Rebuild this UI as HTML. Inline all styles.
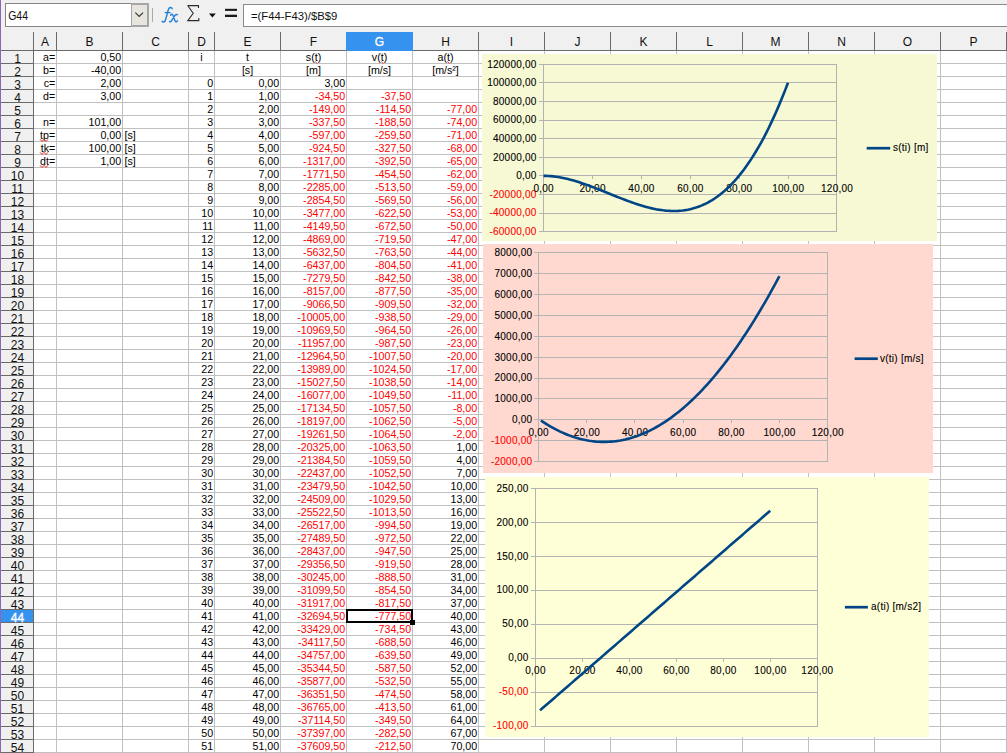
<!DOCTYPE html>
<html><head><meta charset="utf-8"><title>Calc</title>
<style>
html,body{margin:0;padding:0;width:1007px;height:753px;overflow:hidden;background:#f0f0f0;}
svg{display:block;font-family:"Liberation Sans", sans-serif;}
text{font-family:"Liberation Sans", sans-serif;}
</style></head><body>
<svg width="1007" height="753" viewBox="0 0 1007 753">
<rect x="0" y="0" width="1007" height="753" fill="#f0f0f0" />
<rect x="0" y="0" width="1" height="753" fill="#8866b8" />
<rect x="5" y="3" width="144" height="24" fill="#858585" />
<rect x="6" y="4" width="125" height="22" fill="#ffffff" />
<rect x="131" y="3" width="18" height="24" fill="#a6a6a6" />
<rect x="132" y="5" width="15" height="20" fill="#e8e5de" />
<polyline points="135.3,12.6 139.2,16.4 143.1,12.6" fill="none" stroke="#333" stroke-width="1.15"/>
<text x="8.2" y="20.3" font-size="12.5" fill="#111" text-anchor="start" textLength="19.8" lengthAdjust="spacingAndGlyphs">G44</text>
<rect x="152" y="8" width="1" height="14" fill="#a9a9a9" />
<path d="M172.2,8.6 C171.6,7.2 169.8,7.1 168.8,8.6 C167.9,10 166.2,18.5 165.2,20.6 C164.5,22.2 163,22.6 162.2,21.4" fill="none" stroke="#2680d8" stroke-width="1.5" stroke-linecap="round"/>
<path d="M164.6,12.6 L170.6,12.6" fill="none" stroke="#2680d8" stroke-width="1.3"/>
<path d="M170.6,15.2 C171.8,13.6 172.8,14.2 173.4,16.4 L174.8,20.6 C175.4,22.4 176.6,22.2 177.4,20.8 M177.4,14.6 C176.2,14 175.4,14.6 174.2,16.4 L171.8,20.4 C171,21.8 170.2,22.2 169.6,21.6" fill="none" stroke="#2680d8" stroke-width="1.45" stroke-linecap="round"/>
<path d="M187.5,5.6 L198.5,5.6 L198.5,8 M187.8,5.8 L193.2,13.2 L187.8,20.6 L198.8,20.6 L198.8,18" fill="none" stroke="#2a2a2a" stroke-width="1.1"/>
<polygon points="209,13.4 215.8,13.4 212.4,17.5" fill="#111"/>
<rect x="225" y="8.8" width="12" height="2.1" fill="#1a1a1a" />
<rect x="225" y="14.7" width="12" height="2.3" fill="#1a1a1a" />
<rect x="243" y="4" width="764" height="23" fill="#8a8a8a" />
<rect x="244" y="5" width="763" height="21" fill="#ffffff" />
<text x="251" y="19.6" font-size="11.3" fill="#111" text-anchor="start" >=(F44-F43)/$B$9</text>
<rect x="34" y="51" width="973" height="702" fill="#ffffff" />
<rect x="56" y="51" width="1" height="702" fill="#c0c0c0" />
<rect x="122" y="51" width="1" height="702" fill="#c0c0c0" />
<rect x="188" y="51" width="1" height="702" fill="#c0c0c0" />
<rect x="214" y="51" width="1" height="702" fill="#c0c0c0" />
<rect x="280" y="51" width="1" height="702" fill="#c0c0c0" />
<rect x="346" y="51" width="1" height="702" fill="#c0c0c0" />
<rect x="412" y="51" width="1" height="702" fill="#c0c0c0" />
<rect x="478" y="51" width="1" height="702" fill="#c0c0c0" />
<rect x="544" y="51" width="1" height="702" fill="#c0c0c0" />
<rect x="610" y="51" width="1" height="702" fill="#c0c0c0" />
<rect x="676" y="51" width="1" height="702" fill="#c0c0c0" />
<rect x="742" y="51" width="1" height="702" fill="#c0c0c0" />
<rect x="808" y="51" width="1" height="702" fill="#c0c0c0" />
<rect x="874" y="51" width="1" height="702" fill="#c0c0c0" />
<rect x="940" y="51" width="1" height="702" fill="#c0c0c0" />
<rect x="1006" y="51" width="1" height="702" fill="#c0c0c0" />
<rect x="34" y="63" width="973" height="1" fill="#c0c0c0" />
<rect x="34" y="76" width="973" height="1" fill="#c0c0c0" />
<rect x="34" y="89" width="973" height="1" fill="#c0c0c0" />
<rect x="34" y="102" width="973" height="1" fill="#c0c0c0" />
<rect x="34" y="115" width="973" height="1" fill="#c0c0c0" />
<rect x="34" y="128" width="973" height="1" fill="#c0c0c0" />
<rect x="34" y="141" width="973" height="1" fill="#c0c0c0" />
<rect x="34" y="154" width="973" height="1" fill="#c0c0c0" />
<rect x="34" y="167" width="973" height="1" fill="#c0c0c0" />
<rect x="34" y="180" width="973" height="1" fill="#c0c0c0" />
<rect x="34" y="193" width="973" height="1" fill="#c0c0c0" />
<rect x="34" y="206" width="973" height="1" fill="#c0c0c0" />
<rect x="34" y="219" width="973" height="1" fill="#c0c0c0" />
<rect x="34" y="232" width="973" height="1" fill="#c0c0c0" />
<rect x="34" y="245" width="973" height="1" fill="#c0c0c0" />
<rect x="34" y="258" width="973" height="1" fill="#c0c0c0" />
<rect x="34" y="271" width="973" height="1" fill="#c0c0c0" />
<rect x="34" y="284" width="973" height="1" fill="#c0c0c0" />
<rect x="34" y="297" width="973" height="1" fill="#c0c0c0" />
<rect x="34" y="310" width="973" height="1" fill="#c0c0c0" />
<rect x="34" y="323" width="973" height="1" fill="#c0c0c0" />
<rect x="34" y="336" width="973" height="1" fill="#c0c0c0" />
<rect x="34" y="349" width="973" height="1" fill="#c0c0c0" />
<rect x="34" y="362" width="973" height="1" fill="#c0c0c0" />
<rect x="34" y="375" width="973" height="1" fill="#c0c0c0" />
<rect x="34" y="388" width="973" height="1" fill="#c0c0c0" />
<rect x="34" y="401" width="973" height="1" fill="#c0c0c0" />
<rect x="34" y="414" width="973" height="1" fill="#c0c0c0" />
<rect x="34" y="427" width="973" height="1" fill="#c0c0c0" />
<rect x="34" y="440" width="973" height="1" fill="#c0c0c0" />
<rect x="34" y="453" width="973" height="1" fill="#c0c0c0" />
<rect x="34" y="466" width="973" height="1" fill="#c0c0c0" />
<rect x="34" y="479" width="973" height="1" fill="#c0c0c0" />
<rect x="34" y="492" width="973" height="1" fill="#c0c0c0" />
<rect x="34" y="505" width="973" height="1" fill="#c0c0c0" />
<rect x="34" y="518" width="973" height="1" fill="#c0c0c0" />
<rect x="34" y="531" width="973" height="1" fill="#c0c0c0" />
<rect x="34" y="544" width="973" height="1" fill="#c0c0c0" />
<rect x="34" y="557" width="973" height="1" fill="#c0c0c0" />
<rect x="34" y="570" width="973" height="1" fill="#c0c0c0" />
<rect x="34" y="583" width="973" height="1" fill="#c0c0c0" />
<rect x="34" y="596" width="973" height="1" fill="#c0c0c0" />
<rect x="34" y="609" width="973" height="1" fill="#c0c0c0" />
<rect x="34" y="622" width="973" height="1" fill="#c0c0c0" />
<rect x="34" y="635" width="973" height="1" fill="#c0c0c0" />
<rect x="34" y="648" width="973" height="1" fill="#c0c0c0" />
<rect x="34" y="661" width="973" height="1" fill="#c0c0c0" />
<rect x="34" y="674" width="973" height="1" fill="#c0c0c0" />
<rect x="34" y="687" width="973" height="1" fill="#c0c0c0" />
<rect x="34" y="700" width="973" height="1" fill="#c0c0c0" />
<rect x="34" y="713" width="973" height="1" fill="#c0c0c0" />
<rect x="34" y="726" width="973" height="1" fill="#c0c0c0" />
<rect x="34" y="739" width="973" height="1" fill="#c0c0c0" />
<rect x="34" y="752" width="973" height="1" fill="#c0c0c0" />
<rect x="33" y="32" width="1" height="18" fill="#6a6a6a" />
<rect x="56" y="32" width="1" height="18" fill="#6a6a6a" />
<rect x="122" y="32" width="1" height="18" fill="#6a6a6a" />
<rect x="188" y="32" width="1" height="18" fill="#6a6a6a" />
<rect x="214" y="32" width="1" height="18" fill="#6a6a6a" />
<rect x="280" y="32" width="1" height="18" fill="#6a6a6a" />
<rect x="346" y="32" width="1" height="18" fill="#6a6a6a" />
<rect x="412" y="32" width="1" height="18" fill="#6a6a6a" />
<rect x="478" y="32" width="1" height="18" fill="#6a6a6a" />
<rect x="544" y="32" width="1" height="18" fill="#6a6a6a" />
<rect x="610" y="32" width="1" height="18" fill="#6a6a6a" />
<rect x="676" y="32" width="1" height="18" fill="#6a6a6a" />
<rect x="742" y="32" width="1" height="18" fill="#6a6a6a" />
<rect x="808" y="32" width="1" height="18" fill="#6a6a6a" />
<rect x="874" y="32" width="1" height="18" fill="#6a6a6a" />
<rect x="940" y="32" width="1" height="18" fill="#6a6a6a" />
<rect x="1006" y="32" width="1" height="18" fill="#6a6a6a" />
<rect x="1" y="50" width="1006" height="1" fill="#6a6a6a" />
<rect x="346" y="32" width="67" height="19" fill="#3592ef" />
<text x="45.0" y="46" font-size="12" fill="#111" text-anchor="middle" >A</text>
<text x="89.5" y="46" font-size="12" fill="#111" text-anchor="middle" >B</text>
<text x="155.5" y="46" font-size="12" fill="#111" text-anchor="middle" >C</text>
<text x="201.5" y="46" font-size="12" fill="#111" text-anchor="middle" >D</text>
<text x="247.5" y="46" font-size="12" fill="#111" text-anchor="middle" >E</text>
<text x="313.5" y="46" font-size="12" fill="#111" text-anchor="middle" >F</text>
<text x="379.5" y="46" font-size="12" fill="#ffffff" text-anchor="middle" stroke="#ffffff" stroke-width="0.35" >G</text>
<text x="445.5" y="46" font-size="12" fill="#111" text-anchor="middle" >H</text>
<text x="511.5" y="46" font-size="12" fill="#111" text-anchor="middle" >I</text>
<text x="577.5" y="46" font-size="12" fill="#111" text-anchor="middle" >J</text>
<text x="643.5" y="46" font-size="12" fill="#111" text-anchor="middle" >K</text>
<text x="709.5" y="46" font-size="12" fill="#111" text-anchor="middle" >L</text>
<text x="775.5" y="46" font-size="12" fill="#111" text-anchor="middle" >M</text>
<text x="841.5" y="46" font-size="12" fill="#111" text-anchor="middle" >N</text>
<text x="907.5" y="46" font-size="12" fill="#111" text-anchor="middle" >O</text>
<text x="973.5" y="46" font-size="12" fill="#111" text-anchor="middle" >P</text>
<rect x="33" y="32" width="1" height="721" fill="#6a6a6a" />
<rect x="1" y="609" width="32" height="14" fill="#3592ef" />
<rect x="1" y="63" width="32" height="1" fill="#6a6a6a" />
<rect x="1" y="76" width="32" height="1" fill="#6a6a6a" />
<rect x="1" y="89" width="32" height="1" fill="#6a6a6a" />
<rect x="1" y="102" width="32" height="1" fill="#6a6a6a" />
<rect x="1" y="115" width="32" height="1" fill="#6a6a6a" />
<rect x="1" y="128" width="32" height="1" fill="#6a6a6a" />
<rect x="1" y="141" width="32" height="1" fill="#6a6a6a" />
<rect x="1" y="154" width="32" height="1" fill="#6a6a6a" />
<rect x="1" y="167" width="32" height="1" fill="#6a6a6a" />
<rect x="1" y="180" width="32" height="1" fill="#6a6a6a" />
<rect x="1" y="193" width="32" height="1" fill="#6a6a6a" />
<rect x="1" y="206" width="32" height="1" fill="#6a6a6a" />
<rect x="1" y="219" width="32" height="1" fill="#6a6a6a" />
<rect x="1" y="232" width="32" height="1" fill="#6a6a6a" />
<rect x="1" y="245" width="32" height="1" fill="#6a6a6a" />
<rect x="1" y="258" width="32" height="1" fill="#6a6a6a" />
<rect x="1" y="271" width="32" height="1" fill="#6a6a6a" />
<rect x="1" y="284" width="32" height="1" fill="#6a6a6a" />
<rect x="1" y="297" width="32" height="1" fill="#6a6a6a" />
<rect x="1" y="310" width="32" height="1" fill="#6a6a6a" />
<rect x="1" y="323" width="32" height="1" fill="#6a6a6a" />
<rect x="1" y="336" width="32" height="1" fill="#6a6a6a" />
<rect x="1" y="349" width="32" height="1" fill="#6a6a6a" />
<rect x="1" y="362" width="32" height="1" fill="#6a6a6a" />
<rect x="1" y="375" width="32" height="1" fill="#6a6a6a" />
<rect x="1" y="388" width="32" height="1" fill="#6a6a6a" />
<rect x="1" y="401" width="32" height="1" fill="#6a6a6a" />
<rect x="1" y="414" width="32" height="1" fill="#6a6a6a" />
<rect x="1" y="427" width="32" height="1" fill="#6a6a6a" />
<rect x="1" y="440" width="32" height="1" fill="#6a6a6a" />
<rect x="1" y="453" width="32" height="1" fill="#6a6a6a" />
<rect x="1" y="466" width="32" height="1" fill="#6a6a6a" />
<rect x="1" y="479" width="32" height="1" fill="#6a6a6a" />
<rect x="1" y="492" width="32" height="1" fill="#6a6a6a" />
<rect x="1" y="505" width="32" height="1" fill="#6a6a6a" />
<rect x="1" y="518" width="32" height="1" fill="#6a6a6a" />
<rect x="1" y="531" width="32" height="1" fill="#6a6a6a" />
<rect x="1" y="544" width="32" height="1" fill="#6a6a6a" />
<rect x="1" y="557" width="32" height="1" fill="#6a6a6a" />
<rect x="1" y="570" width="32" height="1" fill="#6a6a6a" />
<rect x="1" y="583" width="32" height="1" fill="#6a6a6a" />
<rect x="1" y="596" width="32" height="1" fill="#6a6a6a" />
<rect x="1" y="609" width="32" height="1" fill="#6a6a6a" />
<rect x="1" y="622" width="32" height="1" fill="#6a6a6a" />
<rect x="1" y="635" width="32" height="1" fill="#6a6a6a" />
<rect x="1" y="648" width="32" height="1" fill="#6a6a6a" />
<rect x="1" y="661" width="32" height="1" fill="#6a6a6a" />
<rect x="1" y="674" width="32" height="1" fill="#6a6a6a" />
<rect x="1" y="687" width="32" height="1" fill="#6a6a6a" />
<rect x="1" y="700" width="32" height="1" fill="#6a6a6a" />
<rect x="1" y="713" width="32" height="1" fill="#6a6a6a" />
<rect x="1" y="726" width="32" height="1" fill="#6a6a6a" />
<rect x="1" y="739" width="32" height="1" fill="#6a6a6a" />
<rect x="1" y="752" width="32" height="1" fill="#6a6a6a" />
<text x="17.5" y="63.2" font-size="12" fill="#111" text-anchor="middle" >1</text>
<text x="17.5" y="76.2" font-size="12" fill="#111" text-anchor="middle" >2</text>
<text x="17.5" y="89.2" font-size="12" fill="#111" text-anchor="middle" >3</text>
<text x="17.5" y="102.2" font-size="12" fill="#111" text-anchor="middle" >4</text>
<text x="17.5" y="115.2" font-size="12" fill="#111" text-anchor="middle" >5</text>
<text x="17.5" y="128.2" font-size="12" fill="#111" text-anchor="middle" >6</text>
<text x="17.5" y="141.2" font-size="12" fill="#111" text-anchor="middle" >7</text>
<text x="17.5" y="154.2" font-size="12" fill="#111" text-anchor="middle" >8</text>
<text x="17.5" y="167.2" font-size="12" fill="#111" text-anchor="middle" >9</text>
<text x="17.5" y="180.2" font-size="12" fill="#111" text-anchor="middle" >10</text>
<text x="17.5" y="193.2" font-size="12" fill="#111" text-anchor="middle" >11</text>
<text x="17.5" y="206.2" font-size="12" fill="#111" text-anchor="middle" >12</text>
<text x="17.5" y="219.2" font-size="12" fill="#111" text-anchor="middle" >13</text>
<text x="17.5" y="232.2" font-size="12" fill="#111" text-anchor="middle" >14</text>
<text x="17.5" y="245.2" font-size="12" fill="#111" text-anchor="middle" >15</text>
<text x="17.5" y="258.2" font-size="12" fill="#111" text-anchor="middle" >16</text>
<text x="17.5" y="271.2" font-size="12" fill="#111" text-anchor="middle" >17</text>
<text x="17.5" y="284.2" font-size="12" fill="#111" text-anchor="middle" >18</text>
<text x="17.5" y="297.2" font-size="12" fill="#111" text-anchor="middle" >19</text>
<text x="17.5" y="310.2" font-size="12" fill="#111" text-anchor="middle" >20</text>
<text x="17.5" y="323.2" font-size="12" fill="#111" text-anchor="middle" >21</text>
<text x="17.5" y="336.2" font-size="12" fill="#111" text-anchor="middle" >22</text>
<text x="17.5" y="349.2" font-size="12" fill="#111" text-anchor="middle" >23</text>
<text x="17.5" y="362.2" font-size="12" fill="#111" text-anchor="middle" >24</text>
<text x="17.5" y="375.2" font-size="12" fill="#111" text-anchor="middle" >25</text>
<text x="17.5" y="388.2" font-size="12" fill="#111" text-anchor="middle" >26</text>
<text x="17.5" y="401.2" font-size="12" fill="#111" text-anchor="middle" >27</text>
<text x="17.5" y="414.2" font-size="12" fill="#111" text-anchor="middle" >28</text>
<text x="17.5" y="427.2" font-size="12" fill="#111" text-anchor="middle" >29</text>
<text x="17.5" y="440.2" font-size="12" fill="#111" text-anchor="middle" >30</text>
<text x="17.5" y="453.2" font-size="12" fill="#111" text-anchor="middle" >31</text>
<text x="17.5" y="466.2" font-size="12" fill="#111" text-anchor="middle" >32</text>
<text x="17.5" y="479.2" font-size="12" fill="#111" text-anchor="middle" >33</text>
<text x="17.5" y="492.2" font-size="12" fill="#111" text-anchor="middle" >34</text>
<text x="17.5" y="505.2" font-size="12" fill="#111" text-anchor="middle" >35</text>
<text x="17.5" y="518.2" font-size="12" fill="#111" text-anchor="middle" >36</text>
<text x="17.5" y="531.2" font-size="12" fill="#111" text-anchor="middle" >37</text>
<text x="17.5" y="544.2" font-size="12" fill="#111" text-anchor="middle" >38</text>
<text x="17.5" y="557.2" font-size="12" fill="#111" text-anchor="middle" >39</text>
<text x="17.5" y="570.2" font-size="12" fill="#111" text-anchor="middle" >40</text>
<text x="17.5" y="583.2" font-size="12" fill="#111" text-anchor="middle" >41</text>
<text x="17.5" y="596.2" font-size="12" fill="#111" text-anchor="middle" >42</text>
<text x="17.5" y="609.2" font-size="12" fill="#111" text-anchor="middle" >43</text>
<text x="17.5" y="622.2" font-size="12" fill="#ffffff" text-anchor="middle" stroke="#ffffff" stroke-width="0.35" >44</text>
<text x="17.5" y="635.2" font-size="12" fill="#111" text-anchor="middle" >45</text>
<text x="17.5" y="648.2" font-size="12" fill="#111" text-anchor="middle" >46</text>
<text x="17.5" y="661.2" font-size="12" fill="#111" text-anchor="middle" >47</text>
<text x="17.5" y="674.2" font-size="12" fill="#111" text-anchor="middle" >48</text>
<text x="17.5" y="687.2" font-size="12" fill="#111" text-anchor="middle" >49</text>
<text x="17.5" y="700.2" font-size="12" fill="#111" text-anchor="middle" >50</text>
<text x="17.5" y="713.2" font-size="12" fill="#111" text-anchor="middle" >51</text>
<text x="17.5" y="726.2" font-size="12" fill="#111" text-anchor="middle" >52</text>
<text x="17.5" y="739.2" font-size="12" fill="#111" text-anchor="middle" >53</text>
<text x="17.5" y="752.2" font-size="12" fill="#111" text-anchor="middle" >54</text>
<text x="55.2" y="60.7" font-size="10.67" fill="#000" text-anchor="end" >a=</text>
<text x="121.2" y="60.7" font-size="10.67" fill="#000" text-anchor="end" >0,50</text>
<text x="55.2" y="73.7" font-size="10.67" fill="#000" text-anchor="end" >b=</text>
<text x="121.2" y="73.7" font-size="10.67" fill="#000" text-anchor="end" >-40,00</text>
<text x="55.2" y="86.7" font-size="10.67" fill="#000" text-anchor="end" >c=</text>
<text x="121.2" y="86.7" font-size="10.67" fill="#000" text-anchor="end" >2,00</text>
<text x="55.2" y="99.7" font-size="10.67" fill="#000" text-anchor="end" >d=</text>
<text x="121.2" y="99.7" font-size="10.67" fill="#000" text-anchor="end" >3,00</text>
<text x="55.2" y="125.7" font-size="10.67" fill="#000" text-anchor="end" >n=</text>
<text x="121.2" y="125.7" font-size="10.67" fill="#000" text-anchor="end" >101,00</text>
<text x="55.2" y="138.7" font-size="10.67" fill="#000" text-anchor="end" >tp=</text>
<text x="121.2" y="138.7" font-size="10.67" fill="#000" text-anchor="end" >0,00</text>
<text x="55.2" y="151.7" font-size="10.67" fill="#000" text-anchor="end" >tk=</text>
<text x="121.2" y="151.7" font-size="10.67" fill="#000" text-anchor="end" >100,00</text>
<text x="55.2" y="164.7" font-size="10.67" fill="#000" text-anchor="end" >dt=</text>
<text x="121.2" y="164.7" font-size="10.67" fill="#000" text-anchor="end" >1,00</text>
<text x="124.5" y="138.7" font-size="10.67" fill="#000" text-anchor="start" >[s]</text>
<text x="124.5" y="151.7" font-size="10.67" fill="#000" text-anchor="start" >[s]</text>
<text x="124.5" y="164.7" font-size="10.67" fill="#000" text-anchor="start" >[s]</text>
<text x="201.5" y="60.7" font-size="10.67" fill="#000" text-anchor="middle" >i</text>
<text x="247.5" y="60.7" font-size="10.67" fill="#000" text-anchor="middle" >t</text>
<text x="313.5" y="60.7" font-size="10.67" fill="#000" text-anchor="middle" >s(t)</text>
<text x="379.5" y="60.7" font-size="10.67" fill="#000" text-anchor="middle" >v(t)</text>
<text x="445.5" y="60.7" font-size="10.67" fill="#000" text-anchor="middle" >a(t)</text>
<text x="247.5" y="73.7" font-size="10.67" fill="#000" text-anchor="middle" >[s]</text>
<text x="313.5" y="73.7" font-size="10.67" fill="#000" text-anchor="middle" >[m]</text>
<text x="379.5" y="73.7" font-size="10.67" fill="#000" text-anchor="middle" >[m/s]</text>
<text x="445.5" y="73.7" font-size="10.67" fill="#000" text-anchor="middle" >[m/s²]</text>
<text x="213.2" y="86.7" font-size="10.67" fill="#000" text-anchor="end" >0</text>
<text x="279.2" y="86.7" font-size="10.67" fill="#000" text-anchor="end" >0,00</text>
<text x="345.2" y="86.7" font-size="10.67" fill="#000" text-anchor="end" >3,00</text>
<text x="213.2" y="99.7" font-size="10.67" fill="#000" text-anchor="end" >1</text>
<text x="279.2" y="99.7" font-size="10.67" fill="#000" text-anchor="end" >1,00</text>
<text x="345.2" y="99.7" font-size="10.67" fill="#ff0000" text-anchor="end" >-34,50</text>
<text x="411.2" y="99.7" font-size="10.67" fill="#ff0000" text-anchor="end" >-37,50</text>
<text x="213.2" y="112.7" font-size="10.67" fill="#000" text-anchor="end" >2</text>
<text x="279.2" y="112.7" font-size="10.67" fill="#000" text-anchor="end" >2,00</text>
<text x="345.2" y="112.7" font-size="10.67" fill="#ff0000" text-anchor="end" >-149,00</text>
<text x="411.2" y="112.7" font-size="10.67" fill="#ff0000" text-anchor="end" >-114,50</text>
<text x="477.2" y="112.7" font-size="10.67" fill="#ff0000" text-anchor="end" >-77,00</text>
<text x="213.2" y="125.7" font-size="10.67" fill="#000" text-anchor="end" >3</text>
<text x="279.2" y="125.7" font-size="10.67" fill="#000" text-anchor="end" >3,00</text>
<text x="345.2" y="125.7" font-size="10.67" fill="#ff0000" text-anchor="end" >-337,50</text>
<text x="411.2" y="125.7" font-size="10.67" fill="#ff0000" text-anchor="end" >-188,50</text>
<text x="477.2" y="125.7" font-size="10.67" fill="#ff0000" text-anchor="end" >-74,00</text>
<text x="213.2" y="138.7" font-size="10.67" fill="#000" text-anchor="end" >4</text>
<text x="279.2" y="138.7" font-size="10.67" fill="#000" text-anchor="end" >4,00</text>
<text x="345.2" y="138.7" font-size="10.67" fill="#ff0000" text-anchor="end" >-597,00</text>
<text x="411.2" y="138.7" font-size="10.67" fill="#ff0000" text-anchor="end" >-259,50</text>
<text x="477.2" y="138.7" font-size="10.67" fill="#ff0000" text-anchor="end" >-71,00</text>
<text x="213.2" y="151.7" font-size="10.67" fill="#000" text-anchor="end" >5</text>
<text x="279.2" y="151.7" font-size="10.67" fill="#000" text-anchor="end" >5,00</text>
<text x="345.2" y="151.7" font-size="10.67" fill="#ff0000" text-anchor="end" >-924,50</text>
<text x="411.2" y="151.7" font-size="10.67" fill="#ff0000" text-anchor="end" >-327,50</text>
<text x="477.2" y="151.7" font-size="10.67" fill="#ff0000" text-anchor="end" >-68,00</text>
<text x="213.2" y="164.7" font-size="10.67" fill="#000" text-anchor="end" >6</text>
<text x="279.2" y="164.7" font-size="10.67" fill="#000" text-anchor="end" >6,00</text>
<text x="345.2" y="164.7" font-size="10.67" fill="#ff0000" text-anchor="end" >-1317,00</text>
<text x="411.2" y="164.7" font-size="10.67" fill="#ff0000" text-anchor="end" >-392,50</text>
<text x="477.2" y="164.7" font-size="10.67" fill="#ff0000" text-anchor="end" >-65,00</text>
<text x="213.2" y="177.7" font-size="10.67" fill="#000" text-anchor="end" >7</text>
<text x="279.2" y="177.7" font-size="10.67" fill="#000" text-anchor="end" >7,00</text>
<text x="345.2" y="177.7" font-size="10.67" fill="#ff0000" text-anchor="end" >-1771,50</text>
<text x="411.2" y="177.7" font-size="10.67" fill="#ff0000" text-anchor="end" >-454,50</text>
<text x="477.2" y="177.7" font-size="10.67" fill="#ff0000" text-anchor="end" >-62,00</text>
<text x="213.2" y="190.7" font-size="10.67" fill="#000" text-anchor="end" >8</text>
<text x="279.2" y="190.7" font-size="10.67" fill="#000" text-anchor="end" >8,00</text>
<text x="345.2" y="190.7" font-size="10.67" fill="#ff0000" text-anchor="end" >-2285,00</text>
<text x="411.2" y="190.7" font-size="10.67" fill="#ff0000" text-anchor="end" >-513,50</text>
<text x="477.2" y="190.7" font-size="10.67" fill="#ff0000" text-anchor="end" >-59,00</text>
<text x="213.2" y="203.7" font-size="10.67" fill="#000" text-anchor="end" >9</text>
<text x="279.2" y="203.7" font-size="10.67" fill="#000" text-anchor="end" >9,00</text>
<text x="345.2" y="203.7" font-size="10.67" fill="#ff0000" text-anchor="end" >-2854,50</text>
<text x="411.2" y="203.7" font-size="10.67" fill="#ff0000" text-anchor="end" >-569,50</text>
<text x="477.2" y="203.7" font-size="10.67" fill="#ff0000" text-anchor="end" >-56,00</text>
<text x="213.2" y="216.7" font-size="10.67" fill="#000" text-anchor="end" >10</text>
<text x="279.2" y="216.7" font-size="10.67" fill="#000" text-anchor="end" >10,00</text>
<text x="345.2" y="216.7" font-size="10.67" fill="#ff0000" text-anchor="end" >-3477,00</text>
<text x="411.2" y="216.7" font-size="10.67" fill="#ff0000" text-anchor="end" >-622,50</text>
<text x="477.2" y="216.7" font-size="10.67" fill="#ff0000" text-anchor="end" >-53,00</text>
<text x="213.2" y="229.7" font-size="10.67" fill="#000" text-anchor="end" >11</text>
<text x="279.2" y="229.7" font-size="10.67" fill="#000" text-anchor="end" >11,00</text>
<text x="345.2" y="229.7" font-size="10.67" fill="#ff0000" text-anchor="end" >-4149,50</text>
<text x="411.2" y="229.7" font-size="10.67" fill="#ff0000" text-anchor="end" >-672,50</text>
<text x="477.2" y="229.7" font-size="10.67" fill="#ff0000" text-anchor="end" >-50,00</text>
<text x="213.2" y="242.7" font-size="10.67" fill="#000" text-anchor="end" >12</text>
<text x="279.2" y="242.7" font-size="10.67" fill="#000" text-anchor="end" >12,00</text>
<text x="345.2" y="242.7" font-size="10.67" fill="#ff0000" text-anchor="end" >-4869,00</text>
<text x="411.2" y="242.7" font-size="10.67" fill="#ff0000" text-anchor="end" >-719,50</text>
<text x="477.2" y="242.7" font-size="10.67" fill="#ff0000" text-anchor="end" >-47,00</text>
<text x="213.2" y="255.7" font-size="10.67" fill="#000" text-anchor="end" >13</text>
<text x="279.2" y="255.7" font-size="10.67" fill="#000" text-anchor="end" >13,00</text>
<text x="345.2" y="255.7" font-size="10.67" fill="#ff0000" text-anchor="end" >-5632,50</text>
<text x="411.2" y="255.7" font-size="10.67" fill="#ff0000" text-anchor="end" >-763,50</text>
<text x="477.2" y="255.7" font-size="10.67" fill="#ff0000" text-anchor="end" >-44,00</text>
<text x="213.2" y="268.7" font-size="10.67" fill="#000" text-anchor="end" >14</text>
<text x="279.2" y="268.7" font-size="10.67" fill="#000" text-anchor="end" >14,00</text>
<text x="345.2" y="268.7" font-size="10.67" fill="#ff0000" text-anchor="end" >-6437,00</text>
<text x="411.2" y="268.7" font-size="10.67" fill="#ff0000" text-anchor="end" >-804,50</text>
<text x="477.2" y="268.7" font-size="10.67" fill="#ff0000" text-anchor="end" >-41,00</text>
<text x="213.2" y="281.7" font-size="10.67" fill="#000" text-anchor="end" >15</text>
<text x="279.2" y="281.7" font-size="10.67" fill="#000" text-anchor="end" >15,00</text>
<text x="345.2" y="281.7" font-size="10.67" fill="#ff0000" text-anchor="end" >-7279,50</text>
<text x="411.2" y="281.7" font-size="10.67" fill="#ff0000" text-anchor="end" >-842,50</text>
<text x="477.2" y="281.7" font-size="10.67" fill="#ff0000" text-anchor="end" >-38,00</text>
<text x="213.2" y="294.7" font-size="10.67" fill="#000" text-anchor="end" >16</text>
<text x="279.2" y="294.7" font-size="10.67" fill="#000" text-anchor="end" >16,00</text>
<text x="345.2" y="294.7" font-size="10.67" fill="#ff0000" text-anchor="end" >-8157,00</text>
<text x="411.2" y="294.7" font-size="10.67" fill="#ff0000" text-anchor="end" >-877,50</text>
<text x="477.2" y="294.7" font-size="10.67" fill="#ff0000" text-anchor="end" >-35,00</text>
<text x="213.2" y="307.7" font-size="10.67" fill="#000" text-anchor="end" >17</text>
<text x="279.2" y="307.7" font-size="10.67" fill="#000" text-anchor="end" >17,00</text>
<text x="345.2" y="307.7" font-size="10.67" fill="#ff0000" text-anchor="end" >-9066,50</text>
<text x="411.2" y="307.7" font-size="10.67" fill="#ff0000" text-anchor="end" >-909,50</text>
<text x="477.2" y="307.7" font-size="10.67" fill="#ff0000" text-anchor="end" >-32,00</text>
<text x="213.2" y="320.7" font-size="10.67" fill="#000" text-anchor="end" >18</text>
<text x="279.2" y="320.7" font-size="10.67" fill="#000" text-anchor="end" >18,00</text>
<text x="345.2" y="320.7" font-size="10.67" fill="#ff0000" text-anchor="end" >-10005,00</text>
<text x="411.2" y="320.7" font-size="10.67" fill="#ff0000" text-anchor="end" >-938,50</text>
<text x="477.2" y="320.7" font-size="10.67" fill="#ff0000" text-anchor="end" >-29,00</text>
<text x="213.2" y="333.7" font-size="10.67" fill="#000" text-anchor="end" >19</text>
<text x="279.2" y="333.7" font-size="10.67" fill="#000" text-anchor="end" >19,00</text>
<text x="345.2" y="333.7" font-size="10.67" fill="#ff0000" text-anchor="end" >-10969,50</text>
<text x="411.2" y="333.7" font-size="10.67" fill="#ff0000" text-anchor="end" >-964,50</text>
<text x="477.2" y="333.7" font-size="10.67" fill="#ff0000" text-anchor="end" >-26,00</text>
<text x="213.2" y="346.7" font-size="10.67" fill="#000" text-anchor="end" >20</text>
<text x="279.2" y="346.7" font-size="10.67" fill="#000" text-anchor="end" >20,00</text>
<text x="345.2" y="346.7" font-size="10.67" fill="#ff0000" text-anchor="end" >-11957,00</text>
<text x="411.2" y="346.7" font-size="10.67" fill="#ff0000" text-anchor="end" >-987,50</text>
<text x="477.2" y="346.7" font-size="10.67" fill="#ff0000" text-anchor="end" >-23,00</text>
<text x="213.2" y="359.7" font-size="10.67" fill="#000" text-anchor="end" >21</text>
<text x="279.2" y="359.7" font-size="10.67" fill="#000" text-anchor="end" >21,00</text>
<text x="345.2" y="359.7" font-size="10.67" fill="#ff0000" text-anchor="end" >-12964,50</text>
<text x="411.2" y="359.7" font-size="10.67" fill="#ff0000" text-anchor="end" >-1007,50</text>
<text x="477.2" y="359.7" font-size="10.67" fill="#ff0000" text-anchor="end" >-20,00</text>
<text x="213.2" y="372.7" font-size="10.67" fill="#000" text-anchor="end" >22</text>
<text x="279.2" y="372.7" font-size="10.67" fill="#000" text-anchor="end" >22,00</text>
<text x="345.2" y="372.7" font-size="10.67" fill="#ff0000" text-anchor="end" >-13989,00</text>
<text x="411.2" y="372.7" font-size="10.67" fill="#ff0000" text-anchor="end" >-1024,50</text>
<text x="477.2" y="372.7" font-size="10.67" fill="#ff0000" text-anchor="end" >-17,00</text>
<text x="213.2" y="385.7" font-size="10.67" fill="#000" text-anchor="end" >23</text>
<text x="279.2" y="385.7" font-size="10.67" fill="#000" text-anchor="end" >23,00</text>
<text x="345.2" y="385.7" font-size="10.67" fill="#ff0000" text-anchor="end" >-15027,50</text>
<text x="411.2" y="385.7" font-size="10.67" fill="#ff0000" text-anchor="end" >-1038,50</text>
<text x="477.2" y="385.7" font-size="10.67" fill="#ff0000" text-anchor="end" >-14,00</text>
<text x="213.2" y="398.7" font-size="10.67" fill="#000" text-anchor="end" >24</text>
<text x="279.2" y="398.7" font-size="10.67" fill="#000" text-anchor="end" >24,00</text>
<text x="345.2" y="398.7" font-size="10.67" fill="#ff0000" text-anchor="end" >-16077,00</text>
<text x="411.2" y="398.7" font-size="10.67" fill="#ff0000" text-anchor="end" >-1049,50</text>
<text x="477.2" y="398.7" font-size="10.67" fill="#ff0000" text-anchor="end" >-11,00</text>
<text x="213.2" y="411.7" font-size="10.67" fill="#000" text-anchor="end" >25</text>
<text x="279.2" y="411.7" font-size="10.67" fill="#000" text-anchor="end" >25,00</text>
<text x="345.2" y="411.7" font-size="10.67" fill="#ff0000" text-anchor="end" >-17134,50</text>
<text x="411.2" y="411.7" font-size="10.67" fill="#ff0000" text-anchor="end" >-1057,50</text>
<text x="477.2" y="411.7" font-size="10.67" fill="#ff0000" text-anchor="end" >-8,00</text>
<text x="213.2" y="424.7" font-size="10.67" fill="#000" text-anchor="end" >26</text>
<text x="279.2" y="424.7" font-size="10.67" fill="#000" text-anchor="end" >26,00</text>
<text x="345.2" y="424.7" font-size="10.67" fill="#ff0000" text-anchor="end" >-18197,00</text>
<text x="411.2" y="424.7" font-size="10.67" fill="#ff0000" text-anchor="end" >-1062,50</text>
<text x="477.2" y="424.7" font-size="10.67" fill="#ff0000" text-anchor="end" >-5,00</text>
<text x="213.2" y="437.7" font-size="10.67" fill="#000" text-anchor="end" >27</text>
<text x="279.2" y="437.7" font-size="10.67" fill="#000" text-anchor="end" >27,00</text>
<text x="345.2" y="437.7" font-size="10.67" fill="#ff0000" text-anchor="end" >-19261,50</text>
<text x="411.2" y="437.7" font-size="10.67" fill="#ff0000" text-anchor="end" >-1064,50</text>
<text x="477.2" y="437.7" font-size="10.67" fill="#ff0000" text-anchor="end" >-2,00</text>
<text x="213.2" y="450.7" font-size="10.67" fill="#000" text-anchor="end" >28</text>
<text x="279.2" y="450.7" font-size="10.67" fill="#000" text-anchor="end" >28,00</text>
<text x="345.2" y="450.7" font-size="10.67" fill="#ff0000" text-anchor="end" >-20325,00</text>
<text x="411.2" y="450.7" font-size="10.67" fill="#ff0000" text-anchor="end" >-1063,50</text>
<text x="477.2" y="450.7" font-size="10.67" fill="#000" text-anchor="end" >1,00</text>
<text x="213.2" y="463.7" font-size="10.67" fill="#000" text-anchor="end" >29</text>
<text x="279.2" y="463.7" font-size="10.67" fill="#000" text-anchor="end" >29,00</text>
<text x="345.2" y="463.7" font-size="10.67" fill="#ff0000" text-anchor="end" >-21384,50</text>
<text x="411.2" y="463.7" font-size="10.67" fill="#ff0000" text-anchor="end" >-1059,50</text>
<text x="477.2" y="463.7" font-size="10.67" fill="#000" text-anchor="end" >4,00</text>
<text x="213.2" y="476.7" font-size="10.67" fill="#000" text-anchor="end" >30</text>
<text x="279.2" y="476.7" font-size="10.67" fill="#000" text-anchor="end" >30,00</text>
<text x="345.2" y="476.7" font-size="10.67" fill="#ff0000" text-anchor="end" >-22437,00</text>
<text x="411.2" y="476.7" font-size="10.67" fill="#ff0000" text-anchor="end" >-1052,50</text>
<text x="477.2" y="476.7" font-size="10.67" fill="#000" text-anchor="end" >7,00</text>
<text x="213.2" y="489.7" font-size="10.67" fill="#000" text-anchor="end" >31</text>
<text x="279.2" y="489.7" font-size="10.67" fill="#000" text-anchor="end" >31,00</text>
<text x="345.2" y="489.7" font-size="10.67" fill="#ff0000" text-anchor="end" >-23479,50</text>
<text x="411.2" y="489.7" font-size="10.67" fill="#ff0000" text-anchor="end" >-1042,50</text>
<text x="477.2" y="489.7" font-size="10.67" fill="#000" text-anchor="end" >10,00</text>
<text x="213.2" y="502.7" font-size="10.67" fill="#000" text-anchor="end" >32</text>
<text x="279.2" y="502.7" font-size="10.67" fill="#000" text-anchor="end" >32,00</text>
<text x="345.2" y="502.7" font-size="10.67" fill="#ff0000" text-anchor="end" >-24509,00</text>
<text x="411.2" y="502.7" font-size="10.67" fill="#ff0000" text-anchor="end" >-1029,50</text>
<text x="477.2" y="502.7" font-size="10.67" fill="#000" text-anchor="end" >13,00</text>
<text x="213.2" y="515.7" font-size="10.67" fill="#000" text-anchor="end" >33</text>
<text x="279.2" y="515.7" font-size="10.67" fill="#000" text-anchor="end" >33,00</text>
<text x="345.2" y="515.7" font-size="10.67" fill="#ff0000" text-anchor="end" >-25522,50</text>
<text x="411.2" y="515.7" font-size="10.67" fill="#ff0000" text-anchor="end" >-1013,50</text>
<text x="477.2" y="515.7" font-size="10.67" fill="#000" text-anchor="end" >16,00</text>
<text x="213.2" y="528.7" font-size="10.67" fill="#000" text-anchor="end" >34</text>
<text x="279.2" y="528.7" font-size="10.67" fill="#000" text-anchor="end" >34,00</text>
<text x="345.2" y="528.7" font-size="10.67" fill="#ff0000" text-anchor="end" >-26517,00</text>
<text x="411.2" y="528.7" font-size="10.67" fill="#ff0000" text-anchor="end" >-994,50</text>
<text x="477.2" y="528.7" font-size="10.67" fill="#000" text-anchor="end" >19,00</text>
<text x="213.2" y="541.7" font-size="10.67" fill="#000" text-anchor="end" >35</text>
<text x="279.2" y="541.7" font-size="10.67" fill="#000" text-anchor="end" >35,00</text>
<text x="345.2" y="541.7" font-size="10.67" fill="#ff0000" text-anchor="end" >-27489,50</text>
<text x="411.2" y="541.7" font-size="10.67" fill="#ff0000" text-anchor="end" >-972,50</text>
<text x="477.2" y="541.7" font-size="10.67" fill="#000" text-anchor="end" >22,00</text>
<text x="213.2" y="554.7" font-size="10.67" fill="#000" text-anchor="end" >36</text>
<text x="279.2" y="554.7" font-size="10.67" fill="#000" text-anchor="end" >36,00</text>
<text x="345.2" y="554.7" font-size="10.67" fill="#ff0000" text-anchor="end" >-28437,00</text>
<text x="411.2" y="554.7" font-size="10.67" fill="#ff0000" text-anchor="end" >-947,50</text>
<text x="477.2" y="554.7" font-size="10.67" fill="#000" text-anchor="end" >25,00</text>
<text x="213.2" y="567.7" font-size="10.67" fill="#000" text-anchor="end" >37</text>
<text x="279.2" y="567.7" font-size="10.67" fill="#000" text-anchor="end" >37,00</text>
<text x="345.2" y="567.7" font-size="10.67" fill="#ff0000" text-anchor="end" >-29356,50</text>
<text x="411.2" y="567.7" font-size="10.67" fill="#ff0000" text-anchor="end" >-919,50</text>
<text x="477.2" y="567.7" font-size="10.67" fill="#000" text-anchor="end" >28,00</text>
<text x="213.2" y="580.7" font-size="10.67" fill="#000" text-anchor="end" >38</text>
<text x="279.2" y="580.7" font-size="10.67" fill="#000" text-anchor="end" >38,00</text>
<text x="345.2" y="580.7" font-size="10.67" fill="#ff0000" text-anchor="end" >-30245,00</text>
<text x="411.2" y="580.7" font-size="10.67" fill="#ff0000" text-anchor="end" >-888,50</text>
<text x="477.2" y="580.7" font-size="10.67" fill="#000" text-anchor="end" >31,00</text>
<text x="213.2" y="593.7" font-size="10.67" fill="#000" text-anchor="end" >39</text>
<text x="279.2" y="593.7" font-size="10.67" fill="#000" text-anchor="end" >39,00</text>
<text x="345.2" y="593.7" font-size="10.67" fill="#ff0000" text-anchor="end" >-31099,50</text>
<text x="411.2" y="593.7" font-size="10.67" fill="#ff0000" text-anchor="end" >-854,50</text>
<text x="477.2" y="593.7" font-size="10.67" fill="#000" text-anchor="end" >34,00</text>
<text x="213.2" y="606.7" font-size="10.67" fill="#000" text-anchor="end" >40</text>
<text x="279.2" y="606.7" font-size="10.67" fill="#000" text-anchor="end" >40,00</text>
<text x="345.2" y="606.7" font-size="10.67" fill="#ff0000" text-anchor="end" >-31917,00</text>
<text x="411.2" y="606.7" font-size="10.67" fill="#ff0000" text-anchor="end" >-817,50</text>
<text x="477.2" y="606.7" font-size="10.67" fill="#000" text-anchor="end" >37,00</text>
<text x="213.2" y="619.7" font-size="10.67" fill="#000" text-anchor="end" >41</text>
<text x="279.2" y="619.7" font-size="10.67" fill="#000" text-anchor="end" >41,00</text>
<text x="345.2" y="619.7" font-size="10.67" fill="#ff0000" text-anchor="end" >-32694,50</text>
<text x="411.2" y="619.7" font-size="10.67" fill="#ff0000" text-anchor="end" >-777,50</text>
<text x="477.2" y="619.7" font-size="10.67" fill="#000" text-anchor="end" >40,00</text>
<text x="213.2" y="632.7" font-size="10.67" fill="#000" text-anchor="end" >42</text>
<text x="279.2" y="632.7" font-size="10.67" fill="#000" text-anchor="end" >42,00</text>
<text x="345.2" y="632.7" font-size="10.67" fill="#ff0000" text-anchor="end" >-33429,00</text>
<text x="411.2" y="632.7" font-size="10.67" fill="#ff0000" text-anchor="end" >-734,50</text>
<text x="477.2" y="632.7" font-size="10.67" fill="#000" text-anchor="end" >43,00</text>
<text x="213.2" y="645.7" font-size="10.67" fill="#000" text-anchor="end" >43</text>
<text x="279.2" y="645.7" font-size="10.67" fill="#000" text-anchor="end" >43,00</text>
<text x="345.2" y="645.7" font-size="10.67" fill="#ff0000" text-anchor="end" >-34117,50</text>
<text x="411.2" y="645.7" font-size="10.67" fill="#ff0000" text-anchor="end" >-688,50</text>
<text x="477.2" y="645.7" font-size="10.67" fill="#000" text-anchor="end" >46,00</text>
<text x="213.2" y="658.7" font-size="10.67" fill="#000" text-anchor="end" >44</text>
<text x="279.2" y="658.7" font-size="10.67" fill="#000" text-anchor="end" >44,00</text>
<text x="345.2" y="658.7" font-size="10.67" fill="#ff0000" text-anchor="end" >-34757,00</text>
<text x="411.2" y="658.7" font-size="10.67" fill="#ff0000" text-anchor="end" >-639,50</text>
<text x="477.2" y="658.7" font-size="10.67" fill="#000" text-anchor="end" >49,00</text>
<text x="213.2" y="671.7" font-size="10.67" fill="#000" text-anchor="end" >45</text>
<text x="279.2" y="671.7" font-size="10.67" fill="#000" text-anchor="end" >45,00</text>
<text x="345.2" y="671.7" font-size="10.67" fill="#ff0000" text-anchor="end" >-35344,50</text>
<text x="411.2" y="671.7" font-size="10.67" fill="#ff0000" text-anchor="end" >-587,50</text>
<text x="477.2" y="671.7" font-size="10.67" fill="#000" text-anchor="end" >52,00</text>
<text x="213.2" y="684.7" font-size="10.67" fill="#000" text-anchor="end" >46</text>
<text x="279.2" y="684.7" font-size="10.67" fill="#000" text-anchor="end" >46,00</text>
<text x="345.2" y="684.7" font-size="10.67" fill="#ff0000" text-anchor="end" >-35877,00</text>
<text x="411.2" y="684.7" font-size="10.67" fill="#ff0000" text-anchor="end" >-532,50</text>
<text x="477.2" y="684.7" font-size="10.67" fill="#000" text-anchor="end" >55,00</text>
<text x="213.2" y="697.7" font-size="10.67" fill="#000" text-anchor="end" >47</text>
<text x="279.2" y="697.7" font-size="10.67" fill="#000" text-anchor="end" >47,00</text>
<text x="345.2" y="697.7" font-size="10.67" fill="#ff0000" text-anchor="end" >-36351,50</text>
<text x="411.2" y="697.7" font-size="10.67" fill="#ff0000" text-anchor="end" >-474,50</text>
<text x="477.2" y="697.7" font-size="10.67" fill="#000" text-anchor="end" >58,00</text>
<text x="213.2" y="710.7" font-size="10.67" fill="#000" text-anchor="end" >48</text>
<text x="279.2" y="710.7" font-size="10.67" fill="#000" text-anchor="end" >48,00</text>
<text x="345.2" y="710.7" font-size="10.67" fill="#ff0000" text-anchor="end" >-36765,00</text>
<text x="411.2" y="710.7" font-size="10.67" fill="#ff0000" text-anchor="end" >-413,50</text>
<text x="477.2" y="710.7" font-size="10.67" fill="#000" text-anchor="end" >61,00</text>
<text x="213.2" y="723.7" font-size="10.67" fill="#000" text-anchor="end" >49</text>
<text x="279.2" y="723.7" font-size="10.67" fill="#000" text-anchor="end" >49,00</text>
<text x="345.2" y="723.7" font-size="10.67" fill="#ff0000" text-anchor="end" >-37114,50</text>
<text x="411.2" y="723.7" font-size="10.67" fill="#ff0000" text-anchor="end" >-349,50</text>
<text x="477.2" y="723.7" font-size="10.67" fill="#000" text-anchor="end" >64,00</text>
<text x="213.2" y="736.7" font-size="10.67" fill="#000" text-anchor="end" >50</text>
<text x="279.2" y="736.7" font-size="10.67" fill="#000" text-anchor="end" >50,00</text>
<text x="345.2" y="736.7" font-size="10.67" fill="#ff0000" text-anchor="end" >-37397,00</text>
<text x="411.2" y="736.7" font-size="10.67" fill="#ff0000" text-anchor="end" >-282,50</text>
<text x="477.2" y="736.7" font-size="10.67" fill="#000" text-anchor="end" >67,00</text>
<text x="213.2" y="749.7" font-size="10.67" fill="#000" text-anchor="end" >51</text>
<text x="279.2" y="749.7" font-size="10.67" fill="#000" text-anchor="end" >51,00</text>
<text x="345.2" y="749.7" font-size="10.67" fill="#ff0000" text-anchor="end" >-37609,50</text>
<text x="411.2" y="749.7" font-size="10.67" fill="#ff0000" text-anchor="end" >-212,50</text>
<text x="477.2" y="749.7" font-size="10.67" fill="#000" text-anchor="end" >70,00</text>
<polyline points="315.20,61.50 317.20,63.70" fill="none" stroke="#f02a2a" stroke-width="1" stroke-linejoin="round"/>
<polyline points="381.30,61.50 383.30,63.70" fill="none" stroke="#f02a2a" stroke-width="1" stroke-linejoin="round"/>
<polyline points="447.50,61.50 449.50,63.70" fill="none" stroke="#f02a2a" stroke-width="1" stroke-linejoin="round"/>
<polyline points="40.00,139.30 42.00,141.50 44.00,139.30 46.00,141.50 48.00,139.30" fill="none" stroke="#f02a2a" stroke-width="1" stroke-linejoin="round"/>
<polyline points="40.00,152.30 42.00,154.50 44.00,152.30 46.00,154.50 48.00,152.30" fill="none" stroke="#f02a2a" stroke-width="1" stroke-linejoin="round"/>
<polyline points="40.00,165.30 42.00,167.50 44.00,165.30 46.00,167.50 48.00,165.30" fill="none" stroke="#f02a2a" stroke-width="1" stroke-linejoin="round"/>
<rect x="482" y="54" width="455" height="187" fill="#f6f9d4" />
<rect x="539" y="64" width="298" height="1" fill="#b3b3b3" />
<text x="536.6999999999999" y="67.6" font-size="10" fill="#000" text-anchor="end" stroke="#000" stroke-width="0.1" letter-spacing="0.25">120000,00</text>
<rect x="539" y="82" width="298" height="1" fill="#b3b3b3" />
<text x="536.6999999999999" y="86.19" font-size="10" fill="#000" text-anchor="end" stroke="#000" stroke-width="0.1" letter-spacing="0.25">100000,00</text>
<rect x="539" y="101" width="298" height="1" fill="#b3b3b3" />
<text x="536.6999999999999" y="104.78" font-size="10" fill="#000" text-anchor="end" stroke="#000" stroke-width="0.1" letter-spacing="0.25">80000,00</text>
<rect x="539" y="120" width="298" height="1" fill="#b3b3b3" />
<text x="536.6999999999999" y="123.37" font-size="10" fill="#000" text-anchor="end" stroke="#000" stroke-width="0.1" letter-spacing="0.25">60000,00</text>
<rect x="539" y="138" width="298" height="1" fill="#b3b3b3" />
<text x="536.6999999999999" y="141.96" font-size="10" fill="#000" text-anchor="end" stroke="#000" stroke-width="0.1" letter-spacing="0.25">40000,00</text>
<rect x="539" y="157" width="298" height="1" fill="#b3b3b3" />
<text x="536.6999999999999" y="160.54" font-size="10" fill="#000" text-anchor="end" stroke="#000" stroke-width="0.1" letter-spacing="0.25">20000,00</text>
<rect x="539" y="175" width="298" height="1" fill="#b3b3b3" />
<text x="536.6999999999999" y="179.13" font-size="10" fill="#000" text-anchor="end" stroke="#000" stroke-width="0.1" letter-spacing="0.25">0,00</text>
<rect x="539" y="194" width="298" height="1" fill="#b3b3b3" />
<text x="536.6999999999999" y="197.72" font-size="10" fill="#ff0000" text-anchor="end" stroke="#ff0000" stroke-width="0.1" letter-spacing="0.25">-20000,00</text>
<rect x="539" y="213" width="298" height="1" fill="#b3b3b3" />
<text x="536.6999999999999" y="216.31" font-size="10" fill="#ff0000" text-anchor="end" stroke="#ff0000" stroke-width="0.1" letter-spacing="0.25">-40000,00</text>
<rect x="539" y="231" width="298" height="1" fill="#b3b3b3" />
<text x="536.6999999999999" y="234.9" font-size="10" fill="#ff0000" text-anchor="end" stroke="#ff0000" stroke-width="0.1" letter-spacing="0.25">-60000,00</text>
<rect x="543" y="64" width="1" height="168" fill="#b3b3b3" />
<rect x="836" y="64" width="1" height="168" fill="#b3b3b3" />
<rect x="543" y="175" width="1" height="4" fill="#b3b3b3" />
<text x="543.7" y="191.83" font-size="10" fill="#000" text-anchor="middle" stroke="#000" stroke-width="0.1" letter-spacing="0.25">0,00</text>
<rect x="592" y="175" width="1" height="4" fill="#b3b3b3" />
<text x="592.6" y="191.83" font-size="10" fill="#000" text-anchor="middle" stroke="#000" stroke-width="0.1" letter-spacing="0.25">20,00</text>
<rect x="641" y="175" width="1" height="4" fill="#b3b3b3" />
<text x="641.5" y="191.83" font-size="10" fill="#000" text-anchor="middle" stroke="#000" stroke-width="0.1" letter-spacing="0.25">40,00</text>
<rect x="690" y="175" width="1" height="4" fill="#b3b3b3" />
<text x="690.4" y="191.83" font-size="10" fill="#000" text-anchor="middle" stroke="#000" stroke-width="0.1" letter-spacing="0.25">60,00</text>
<rect x="739" y="175" width="1" height="4" fill="#b3b3b3" />
<text x="739.3" y="191.83" font-size="10" fill="#000" text-anchor="middle" stroke="#000" stroke-width="0.1" letter-spacing="0.25">80,00</text>
<rect x="788" y="175" width="1" height="4" fill="#b3b3b3" />
<text x="788.2" y="191.83" font-size="10" fill="#000" text-anchor="middle" stroke="#000" stroke-width="0.1" letter-spacing="0.25">100,00</text>
<rect x="836" y="175" width="1" height="4" fill="#b3b3b3" />
<text x="837.1" y="191.83" font-size="10" fill="#000" text-anchor="middle" stroke="#000" stroke-width="0.1" letter-spacing="0.25">120,00</text>
<polyline points="543.50,175.83 545.95,175.87 548.39,175.97 550.84,176.15 553.28,176.39 555.73,176.69 558.17,177.06 560.62,177.48 563.06,177.96 565.50,178.49 567.95,179.07 570.39,179.69 572.84,180.36 575.28,181.07 577.73,181.82 580.17,182.60 582.62,183.41 585.07,184.26 587.51,185.13 589.96,186.03 592.40,186.95 594.85,187.88 597.29,188.84 599.74,189.80 602.18,190.78 604.62,191.76 607.07,192.75 609.51,193.74 611.96,194.72 614.40,195.71 616.85,196.69 619.29,197.66 621.74,198.61 624.18,199.56 626.63,200.48 629.08,201.38 631.52,202.26 633.97,203.12 636.41,203.94 638.86,204.74 641.30,205.50 643.75,206.22 646.19,206.90 648.63,207.54 651.08,208.14 653.52,208.68 655.97,209.18 658.41,209.62 660.86,210.00 663.30,210.33 665.75,210.59 668.19,210.79 670.64,210.92 673.09,210.98 675.53,210.96 677.98,210.87 680.42,210.70 682.87,210.45 685.31,210.12 687.75,209.69 690.20,209.18 692.64,208.57 695.09,207.87 697.53,207.07 699.98,206.17 702.42,205.16 704.87,204.05 707.32,202.83 709.76,201.49 712.20,200.04 714.65,198.47 717.10,196.78 719.54,194.97 721.98,193.03 724.43,190.96 726.88,188.76 729.32,186.43 731.76,183.95 734.21,181.34 736.65,178.58 739.10,175.68 741.54,172.63 743.99,169.43 746.43,166.07 748.88,162.56 751.33,158.88 753.77,155.05 756.21,151.05 758.66,146.88 761.11,142.54 763.55,138.02 766.00,133.33 768.44,128.46 770.88,123.41 773.33,118.17 775.77,112.74 778.22,107.13 780.66,101.32 783.11,95.31 785.55,89.11 788.00,82.70" fill="none" stroke="#004586" stroke-width="2.6" stroke-linejoin="round"/>
<line x1="866.7" y1="148.2" x2="890.2" y2="148.2" stroke="#004586" stroke-width="2.7"/>
<text x="893" y="150.9" font-size="10" fill="#000" text-anchor="start" stroke="#000" stroke-width="0.1" letter-spacing="0.25">s(ti) [m]</text>
<rect x="483" y="244" width="450" height="229" fill="#ffd9cf" />
<rect x="534" y="252" width="294" height="1" fill="#b3b3b3" />
<text x="532.4" y="256.3" font-size="10" fill="#000" text-anchor="end" stroke="#000" stroke-width="0.1" letter-spacing="0.25">8000,00</text>
<rect x="534" y="273" width="294" height="1" fill="#b3b3b3" />
<text x="532.4" y="277.14" font-size="10" fill="#000" text-anchor="end" stroke="#000" stroke-width="0.1" letter-spacing="0.25">7000,00</text>
<rect x="534" y="294" width="294" height="1" fill="#b3b3b3" />
<text x="532.4" y="297.98" font-size="10" fill="#000" text-anchor="end" stroke="#000" stroke-width="0.1" letter-spacing="0.25">6000,00</text>
<rect x="534" y="315" width="294" height="1" fill="#b3b3b3" />
<text x="532.4" y="318.82" font-size="10" fill="#000" text-anchor="end" stroke="#000" stroke-width="0.1" letter-spacing="0.25">5000,00</text>
<rect x="534" y="336" width="294" height="1" fill="#b3b3b3" />
<text x="532.4" y="339.66" font-size="10" fill="#000" text-anchor="end" stroke="#000" stroke-width="0.1" letter-spacing="0.25">4000,00</text>
<rect x="534" y="357" width="294" height="1" fill="#b3b3b3" />
<text x="532.4" y="360.5" font-size="10" fill="#000" text-anchor="end" stroke="#000" stroke-width="0.1" letter-spacing="0.25">3000,00</text>
<rect x="534" y="378" width="294" height="1" fill="#b3b3b3" />
<text x="532.4" y="381.34" font-size="10" fill="#000" text-anchor="end" stroke="#000" stroke-width="0.1" letter-spacing="0.25">2000,00</text>
<rect x="534" y="398" width="294" height="1" fill="#b3b3b3" />
<text x="532.4" y="402.18" font-size="10" fill="#000" text-anchor="end" stroke="#000" stroke-width="0.1" letter-spacing="0.25">1000,00</text>
<rect x="534" y="419" width="294" height="1" fill="#b3b3b3" />
<text x="532.4" y="423.02" font-size="10" fill="#000" text-anchor="end" stroke="#000" stroke-width="0.1" letter-spacing="0.25">0,00</text>
<rect x="534" y="440" width="294" height="1" fill="#b3b3b3" />
<text x="532.4" y="443.86" font-size="10" fill="#ff0000" text-anchor="end" stroke="#ff0000" stroke-width="0.1" letter-spacing="0.25">-1000,00</text>
<rect x="534" y="461" width="294" height="1" fill="#b3b3b3" />
<text x="532.4" y="464.7" font-size="10" fill="#ff0000" text-anchor="end" stroke="#ff0000" stroke-width="0.1" letter-spacing="0.25">-2000,00</text>
<rect x="538" y="252" width="1" height="210" fill="#b3b3b3" />
<rect x="827" y="252" width="1" height="210" fill="#b3b3b3" />
<rect x="538" y="419" width="1" height="4" fill="#b3b3b3" />
<text x="538.7" y="435.72" font-size="10" fill="#000" text-anchor="middle" stroke="#000" stroke-width="0.1" letter-spacing="0.25">0,00</text>
<rect x="586" y="419" width="1" height="4" fill="#b3b3b3" />
<text x="586.88" y="435.72" font-size="10" fill="#000" text-anchor="middle" stroke="#000" stroke-width="0.1" letter-spacing="0.25">20,00</text>
<rect x="634" y="419" width="1" height="4" fill="#b3b3b3" />
<text x="635.07" y="435.72" font-size="10" fill="#000" text-anchor="middle" stroke="#000" stroke-width="0.1" letter-spacing="0.25">40,00</text>
<rect x="683" y="419" width="1" height="4" fill="#b3b3b3" />
<text x="683.25" y="435.72" font-size="10" fill="#000" text-anchor="middle" stroke="#000" stroke-width="0.1" letter-spacing="0.25">60,00</text>
<rect x="731" y="419" width="1" height="4" fill="#b3b3b3" />
<text x="731.43" y="435.72" font-size="10" fill="#000" text-anchor="middle" stroke="#000" stroke-width="0.1" letter-spacing="0.25">80,00</text>
<rect x="779" y="419" width="1" height="4" fill="#b3b3b3" />
<text x="779.62" y="435.72" font-size="10" fill="#000" text-anchor="middle" stroke="#000" stroke-width="0.1" letter-spacing="0.25">100,00</text>
<rect x="827" y="419" width="1" height="4" fill="#b3b3b3" />
<text x="827.8" y="435.72" font-size="10" fill="#000" text-anchor="middle" stroke="#000" stroke-width="0.1" letter-spacing="0.25">120,00</text>
<polyline points="540.91,420.50 543.32,422.11 545.73,423.65 548.14,425.13 550.55,426.55 552.96,427.90 555.36,429.19 557.77,430.42 560.18,431.59 562.59,432.69 565.00,433.73 567.41,434.71 569.82,435.63 572.23,436.49 574.64,437.28 577.05,438.01 579.46,438.67 581.87,439.28 584.27,439.82 586.68,440.30 589.09,440.72 591.50,441.07 593.91,441.36 596.32,441.59 598.73,441.76 601.14,441.86 603.55,441.90 605.96,441.88 608.37,441.80 610.77,441.65 613.18,441.45 615.59,441.17 618.00,440.84 620.41,440.45 622.82,439.99 625.23,439.47 627.64,438.88 630.05,438.24 632.46,437.53 634.87,436.76 637.28,435.92 639.68,435.03 642.09,434.07 644.50,433.05 646.91,431.96 649.32,430.82 651.73,429.61 654.14,428.34 656.55,427.00 658.96,425.61 661.37,424.15 663.78,422.63 666.19,421.04 668.60,419.40 671.00,417.69 673.41,415.92 675.82,414.08 678.23,412.19 680.64,410.23 683.05,408.21 685.46,406.12 687.87,403.98 690.28,401.77 692.69,399.49 695.10,397.16 697.50,394.76 699.91,392.30 702.32,389.78 704.73,387.20 707.14,384.55 709.55,381.84 711.96,379.07 714.37,376.24 716.78,373.34 719.19,370.38 721.60,367.36 724.01,364.28 726.41,361.13 728.82,357.92 731.23,354.65 733.64,351.31 736.05,347.92 738.46,344.46 740.87,340.93 743.28,337.35 745.69,333.70 748.10,329.99 750.51,326.22 752.92,322.39 755.33,318.49 757.73,314.53 760.14,310.51 762.55,306.42 764.96,302.28 767.37,298.07 769.78,293.79 772.19,289.46 774.60,285.06 777.01,280.60 779.42,276.08" fill="none" stroke="#004586" stroke-width="2.6" stroke-linejoin="round"/>
<line x1="854.6" y1="358.7" x2="877.8" y2="358.7" stroke="#004586" stroke-width="2.7"/>
<text x="880" y="362.3" font-size="10" fill="#000" text-anchor="start" stroke="#000" stroke-width="0.1" letter-spacing="0.25">v(ti) [m/s]</text>
<rect x="485" y="477" width="444" height="260" fill="#ffffd7" />
<rect x="531" y="488" width="287" height="1" fill="#b3b3b3" />
<text x="528.5999999999999" y="491.6" font-size="10" fill="#000" text-anchor="end" stroke="#000" stroke-width="0.1" letter-spacing="0.25">250,00</text>
<rect x="531" y="522" width="287" height="1" fill="#b3b3b3" />
<text x="528.5999999999999" y="525.56" font-size="10" fill="#000" text-anchor="end" stroke="#000" stroke-width="0.1" letter-spacing="0.25">200,00</text>
<rect x="531" y="556" width="287" height="1" fill="#b3b3b3" />
<text x="528.5999999999999" y="559.51" font-size="10" fill="#000" text-anchor="end" stroke="#000" stroke-width="0.1" letter-spacing="0.25">150,00</text>
<rect x="531" y="590" width="287" height="1" fill="#b3b3b3" />
<text x="528.5999999999999" y="593.47" font-size="10" fill="#000" text-anchor="end" stroke="#000" stroke-width="0.1" letter-spacing="0.25">100,00</text>
<rect x="531" y="624" width="287" height="1" fill="#b3b3b3" />
<text x="528.5999999999999" y="627.43" font-size="10" fill="#000" text-anchor="end" stroke="#000" stroke-width="0.1" letter-spacing="0.25">50,00</text>
<rect x="531" y="658" width="287" height="1" fill="#b3b3b3" />
<text x="528.5999999999999" y="661.39" font-size="10" fill="#000" text-anchor="end" stroke="#000" stroke-width="0.1" letter-spacing="0.25">0,00</text>
<rect x="531" y="692" width="287" height="1" fill="#b3b3b3" />
<text x="528.5999999999999" y="695.34" font-size="10" fill="#ff0000" text-anchor="end" stroke="#ff0000" stroke-width="0.1" letter-spacing="0.25">-50,00</text>
<rect x="531" y="726" width="287" height="1" fill="#b3b3b3" />
<text x="528.5999999999999" y="729.3" font-size="10" fill="#ff0000" text-anchor="end" stroke="#ff0000" stroke-width="0.1" letter-spacing="0.25">-100,00</text>
<rect x="535" y="488" width="1" height="239" fill="#b3b3b3" />
<rect x="817" y="488" width="1" height="239" fill="#b3b3b3" />
<rect x="535" y="658" width="1" height="4" fill="#b3b3b3" />
<text x="535.5" y="674.09" font-size="10" fill="#000" text-anchor="middle" stroke="#000" stroke-width="0.1" letter-spacing="0.25">0,00</text>
<rect x="582" y="658" width="1" height="4" fill="#b3b3b3" />
<text x="582.48" y="674.09" font-size="10" fill="#000" text-anchor="middle" stroke="#000" stroke-width="0.1" letter-spacing="0.25">20,00</text>
<rect x="629" y="658" width="1" height="4" fill="#b3b3b3" />
<text x="629.47" y="674.09" font-size="10" fill="#000" text-anchor="middle" stroke="#000" stroke-width="0.1" letter-spacing="0.25">40,00</text>
<rect x="676" y="658" width="1" height="4" fill="#b3b3b3" />
<text x="676.45" y="674.09" font-size="10" fill="#000" text-anchor="middle" stroke="#000" stroke-width="0.1" letter-spacing="0.25">60,00</text>
<rect x="723" y="658" width="1" height="4" fill="#b3b3b3" />
<text x="723.43" y="674.09" font-size="10" fill="#000" text-anchor="middle" stroke="#000" stroke-width="0.1" letter-spacing="0.25">80,00</text>
<rect x="770" y="658" width="1" height="4" fill="#b3b3b3" />
<text x="770.42" y="674.09" font-size="10" fill="#000" text-anchor="middle" stroke="#000" stroke-width="0.1" letter-spacing="0.25">100,00</text>
<rect x="817" y="658" width="1" height="4" fill="#b3b3b3" />
<text x="817.4" y="674.09" font-size="10" fill="#000" text-anchor="middle" stroke="#000" stroke-width="0.1" letter-spacing="0.25">120,00</text>
<polyline points="540.00,710.38 542.35,708.34 544.70,706.30 547.05,704.27 549.39,702.23 551.74,700.19 554.09,698.16 556.44,696.12 558.79,694.08 561.14,692.04 563.49,690.01 565.84,687.97 568.19,685.93 570.54,683.89 572.89,681.86 575.24,679.82 577.58,677.78 579.93,675.74 582.28,673.71 584.63,671.67 586.98,669.63 589.33,667.59 591.68,665.56 594.03,663.52 596.38,661.48 598.73,659.44 601.08,657.41 603.43,655.37 605.77,653.33 608.12,651.29 610.47,649.26 612.82,647.22 615.17,645.18 617.52,643.14 619.87,641.11 622.22,639.07 624.57,637.03 626.92,634.99 629.27,632.96 631.62,630.92 633.96,628.88 636.31,626.85 638.66,624.81 641.01,622.77 643.36,620.73 645.71,618.70 648.06,616.66 650.41,614.62 652.76,612.58 655.11,610.55 657.46,608.51 659.81,606.47 662.15,604.43 664.50,602.40 666.85,600.36 669.20,598.32 671.55,596.28 673.90,594.25 676.25,592.21 678.60,590.17 680.95,588.13 683.30,586.10 685.65,584.06 688.00,582.02 690.35,579.98 692.69,577.95 695.04,575.91 697.39,573.87 699.74,571.83 702.09,569.80 704.44,567.76 706.79,565.72 709.14,563.68 711.49,561.65 713.84,559.61 716.19,557.57 718.54,555.54 720.88,553.50 723.23,551.46 725.58,549.42 727.93,547.39 730.28,545.35 732.63,543.31 734.98,541.27 737.33,539.24 739.68,537.20 742.03,535.16 744.38,533.12 746.73,531.09 749.07,529.05 751.42,527.01 753.77,524.97 756.12,522.94 758.47,520.90 760.82,518.86 763.17,516.82 765.52,514.79 767.87,512.75 770.22,510.71" fill="none" stroke="#004586" stroke-width="2.6" stroke-linejoin="round"/>
<line x1="844.9" y1="607.2" x2="867.9" y2="607.2" stroke="#004586" stroke-width="2.7"/>
<text x="871" y="609.9" font-size="10" fill="#000" text-anchor="start" stroke="#000" stroke-width="0.1" letter-spacing="0.25">a(ti) [m/s2]</text>
<rect x="347" y="610" width="65" height="12" fill="none" stroke="#000" stroke-width="2"/>
<rect x="410" y="620" width="5" height="5" fill="#000" />
</svg>
</body></html>
